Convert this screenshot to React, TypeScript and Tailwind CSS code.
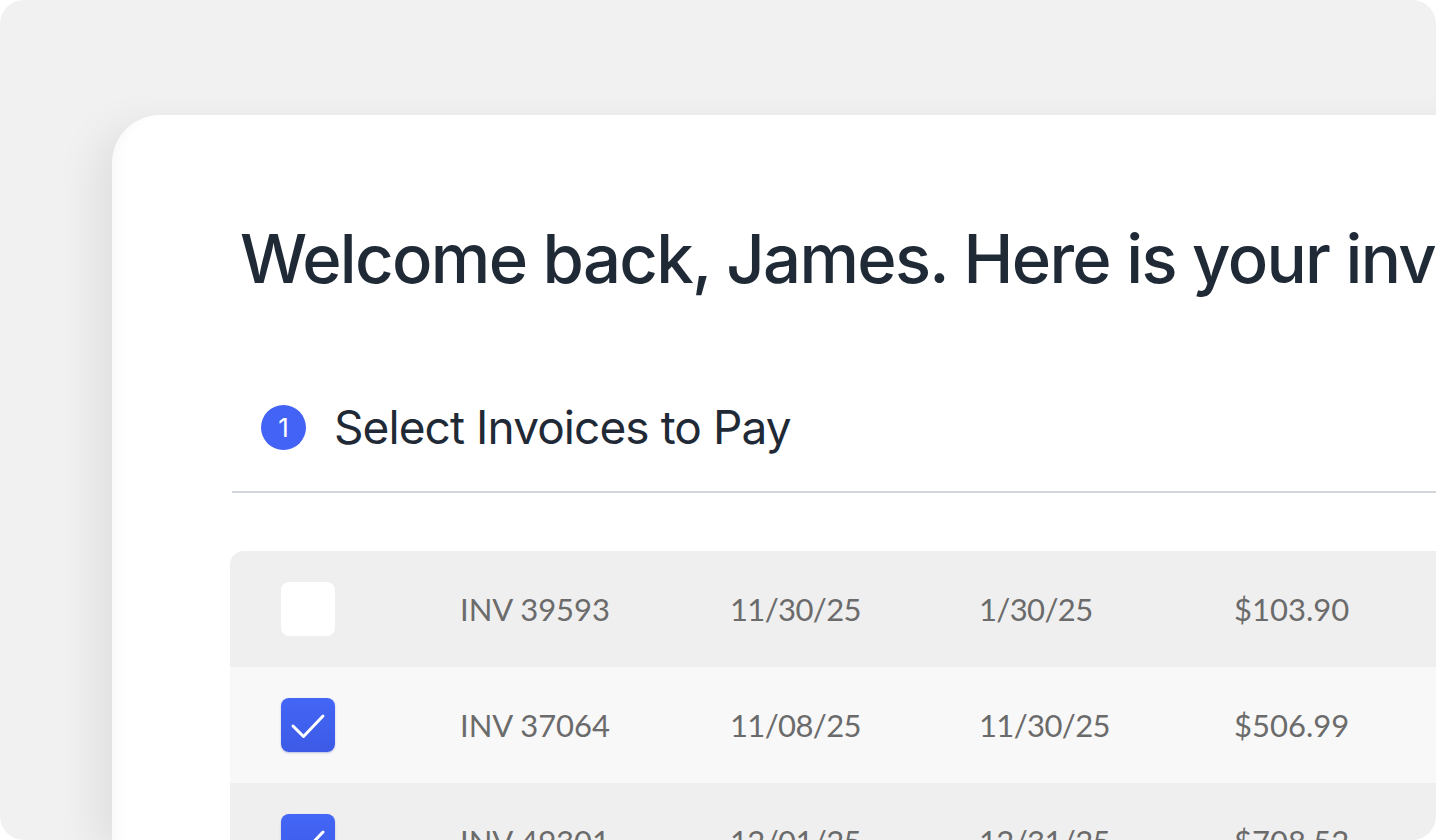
const invoices = [
  { id: "INV 39593", issued: "11/30/25", due: "1/30/25", amount: "$103.90", checked: false },
  { id: "INV 37064", issued: "11/08/25", due: "11/30/25", amount: "$506.99", checked: true },
  { id: "INV 49301", issued: "12/01/25", due: "12/31/25", amount: "$708.52", checked: true },
];

function Checkbox({ checked }: { checked: boolean }) {
  if (!checked) {
    return <div className="h-[54px] w-[54px] rounded-[8px] bg-white" />;
  }
  return (
    <div className="flex h-[54px] w-[54px] items-center justify-center rounded-[8px] bg-gradient-to-b from-[#4466f6] to-[#3c5ae6] shadow-[0_1px_2px_rgba(40,60,160,0.3)]">
      <svg viewBox="0 0 54 54" className="h-[54px] w-[54px]" fill="none">
        <path d="M12 28 L22.5 38.5 L42 18" stroke="white" strokeWidth="3" strokeLinecap="round" strokeLinejoin="round" />
      </svg>
    </div>
  );
}

export default function App() {
  return (
    <div className="h-[840px] w-[1436px] overflow-hidden bg-white">
      <div className="flex h-full w-full overflow-hidden rounded-[24px] bg-[#f1f1f1] pl-[112px] pt-[115px]">
        <div className="w-[1400px] shrink-0 rounded-tl-[48px] bg-white pl-[118px] pt-[110px] font-['Inter',sans-serif] shadow-[-18px_10px_40px_rgba(0,0,0,0.07),inset_14px_0_14px_-10px_rgba(0,0,0,0.03)]">
          <h1 className="ml-[10px] whitespace-nowrap text-[67px] font-medium leading-none tracking-[-0.025em] text-[#1f2a36]">
            Welcome back, James. Here is your invoice summary.
          </h1>

          <div className="mt-[112px] flex items-center gap-[28px] pl-[31px]">
            <div className="flex h-[45px] w-[45px] items-center justify-center rounded-full bg-[#4263f5] text-[26px] font-normal text-white">
              1
            </div>
            <h2 className="text-[46px] font-normal leading-none tracking-[-0.02em] text-[#1f2a36]">
              Select Invoices to Pay
            </h2>
          </div>

          <div className="ml-[2px] mt-[41px] h-[2px] bg-[#d2d6db]" />

          <div className="mt-[58px] overflow-hidden rounded-tl-[14px] font-['Lato',sans-serif] text-[31px] text-[#6b6b6b]">
            {invoices.map((inv, i) => (
              <div
                key={inv.id}
                className={`grid h-[116px] grid-cols-[230px_270px_249px_255px_1fr] items-center ${
                  i % 2 === 0 ? "bg-[#efefef]" : "bg-[#f8f8f8]"
                }`}
              >
                <div className="pl-[51px]">
                  <Checkbox checked={inv.checked} />
                </div>
                <div>{inv.id}</div>
                <div className="tracking-[-0.02em]">{inv.issued}</div>
                <div className="tracking-[-0.02em]">{inv.due}</div>
                <div>{inv.amount}</div>
              </div>
            ))}
          </div>
        </div>
      </div>
    </div>
  );
}
